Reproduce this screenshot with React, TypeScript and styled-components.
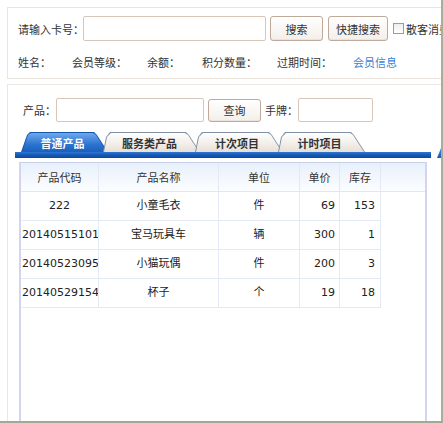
import styled, { createGlobalStyle } from "styled-components";

const GlobalStyle = createGlobalStyle`
  html, body {
    margin: 0;
    padding: 0;
    background: #ffffff;
  }
  body {
    font-family: "DejaVu Sans", "Noto Sans CJK SC", sans-serif;
    font-size: 11px;
    color: #333333;
  }
`;

interface Product {
  code: string;
  name: string;
  unit: string;
  price: number;
  stock: number;
}

const products: Product[] = [
  { code: "222", name: "小童毛衣", unit: "件", price: 69, stock: 153 },
  { code: "201405151012", name: "宝马玩具车", unit: "辆", price: 300, stock: 1 },
  { code: "201405230958", name: "小猫玩偶", unit: "件", price: 200, stock: 3 },
  { code: "201405291540", name: "杯子", unit: "个", price: 19, stock: 18 },
];

const tabs = [
  { label: "普通产品", width: 87, active: true },
  { label: "服务类产品", width: 97 },
  { label: "计次项目", width: 88 },
  { label: "计时项目", width: 87 },
];

const infoItems = [
  { label: "姓名：", width: 54 },
  { label: "会员等级：", width: 75 },
  { label: "余额：", width: 55 },
  { label: "积分数量：", width: 75 },
  { label: "过期时间：", width: 76 },
];

export default function App() {
  return (
    <>
      <GlobalStyle />
      <Frame>
        <MemberPanel>
          <SearchRow>
            <Label $w={65}>请输入卡号：</Label>
            <TextInput $w={183} $h={25} />
            <Button $w={53} $h={25} $ml={4}>
              搜索
            </Button>
            <Button $w={60} $h={25} $ml={5}>
              快捷搜索
            </Button>
            <CheckLabel>
              <CheckBox />
              散客消费
            </CheckLabel>
          </SearchRow>
          <InfoRow>
            {infoItems.map((it) => (
              <Label key={it.label} $w={it.width}>
                {it.label}
              </Label>
            ))}
            <Link>会员信息</Link>
          </InfoRow>
        </MemberPanel>

        <ProductPanel>
          <FilterRow>
            <Label $w={33}>产品：</Label>
            <TextInput $w={148} $h={24} />
            <Button $w={53} $h={23} $ml={4}>
              查询
            </Button>
            <Label $w={33} $ml={4}>
              手牌：
            </Label>
            <TextInput $w={75} $h={24} />
          </FilterRow>

          <TabStrip>
            {tabs.map((t) => (
              <Tab key={t.label} $w={t.width} $active={!!t.active}>
                <span>{t.label}</span>
              </Tab>
            ))}
          </TabStrip>
          <BarRow>
            <TabBar />
            <BarTail />
          </BarRow>

          <Grid>
            <HeadRow>
              <HeadCell>产品代码</HeadCell>
              <HeadCell>产品名称</HeadCell>
              <HeadCell>单位</HeadCell>
              <HeadCell>单价</HeadCell>
              <HeadCell>库存</HeadCell>
              <HeadCell $last />
            </HeadRow>
            {products.map((p) => (
              <Row key={p.code}>
                <Cell $align="center">{p.code}</Cell>
                <Cell $align="center">{p.name}</Cell>
                <Cell $align="center">{p.unit}</Cell>
                <Cell $align="right">{p.price}</Cell>
                <Cell $align="right" $pad={5}>
                  {p.stock}
                </Cell>
              </Row>
            ))}
          </Grid>
        </ProductPanel>
      </Frame>
    </>
  );
}

const Frame = styled.div`
  width: 443px;
  height: 423px;
  box-sizing: border-box;
  border-right: 2px solid #a9ac98;
  border-bottom: 2px solid #a4a792;
  overflow: hidden;
  padding: 7px 0 0 7px;
  display: flex;
  flex-direction: column;
  gap: 5px;
`;

const MemberPanel = styled.div`
  flex-shrink: 0;
  width: 470px;
  height: 72px;
  box-sizing: border-box;
  border: 1px solid #ece5de;
  padding: 8px 0 0 10px;
`;

const SearchRow = styled.div`
  display: flex;
  align-items: center;
  height: 25px;
`;

const InfoRow = styled.div`
  display: flex;
  align-items: center;
  margin-top: 13px;
  height: 16px;
`;

const Label = styled.span<{ $w: number; $ml?: number }>`
  flex-shrink: 0;
  width: ${(p) => p.$w}px;
  margin-left: ${(p) => p.$ml ?? 0}px;
  white-space: nowrap;
  color: #333333;
`;

const Link = styled.span`
  color: #3d7fd6;
  white-space: nowrap;
`;

const TextInput = styled.div<{ $w: number; $h: number }>`
  flex-shrink: 0;
  width: ${(p) => p.$w}px;
  height: ${(p) => p.$h}px;
  box-sizing: border-box;
  border: 1px solid #d8c6b8;
  border-radius: 2px;
  background: #ffffff;
`;

const Button = styled.div<{ $w: number; $h: number; $ml: number }>`
  flex-shrink: 0;
  width: ${(p) => p.$w}px;
  height: ${(p) => p.$h}px;
  margin-left: ${(p) => p.$ml}px;
  box-sizing: border-box;
  border: 1px solid #bea99a;
  border-radius: 3px;
  background: linear-gradient(#ffffff, #f3efea);
  box-shadow: inset 0 -1px 0 #ebe3dc;
  display: flex;
  align-items: center;
  justify-content: center;
  color: #333333;
`;

const CheckLabel = styled.span`
  display: flex;
  align-items: center;
  margin-left: 5px;
  white-space: nowrap;
  gap: 2px;
`;

const CheckBox = styled.span`
  width: 11px;
  height: 11px;
  box-sizing: border-box;
  border: 1px solid #9c9c9c;
  background: linear-gradient(#eeeeee, #ffffff);
`;

const ProductPanel = styled.div`
  flex: 1;
  width: 470px;
  box-sizing: border-box;
  border: 1px solid #ede7e1;
  border-bottom: none;
  padding: 13px 0 0 7px;
  display: flex;
  flex-direction: column;
`;

const FilterRow = styled.div`
  display: flex;
  align-items: center;
  height: 24px;
  margin-left: 8px;
`;

const TabStrip = styled.div`
  display: flex;
  align-items: flex-end;
  margin-top: 10px;
  padding-left: 6px;
  height: 20px;
`;

const Tab = styled.div<{ $w: number; $active: boolean }>`
  position: relative;
  flex-shrink: 0;
  width: ${(p) => p.$w}px;
  height: 20px;
  margin-right: -5px;
  display: flex;
  align-items: center;
  justify-content: center;
  font-weight: bold;
  color: ${(p) => (p.$active ? "#ffffff" : "#333333")};

  &::before,
  &::after {
    content: "";
    position: absolute;
    left: 0;
    right: 0;
    bottom: 0;
  }
  &::before {
    top: 0;
    background: ${(p) => (p.$active ? "#1556ad" : "#8192a6")};
    clip-path: ${(p) =>
      p.$active
        ? "polygon(0 100%, 6px 3px, 9px 0, calc(100% - 14px) 0, calc(100% - 11px) 3px, 100% 100%)"
        : "polygon(0 100%, 3px 5px, 7px 0, calc(100% - 14px) 0, calc(100% - 11px) 3px, 100% 100%)"};
  }
  &::after {
    top: 1px;
    background: ${(p) =>
      p.$active
        ? "linear-gradient(#6ea8ec, #2d74d0 60%, #1860bf)"
        : "linear-gradient(#ffffff, #f4f0eb 50%, #e6dfd6)"};
    clip-path: ${(p) =>
      p.$active
        ? "polygon(1px 100%, 7px 2px, 10px 0, calc(100% - 15px) 0, calc(100% - 12px) 2px, calc(100% - 1px) 100%)"
        : "polygon(1px 100%, 4px 4px, 8px 0, calc(100% - 15px) 0, calc(100% - 12px) 2px, calc(100% - 1px) 100%)"};
  }
  span {
    position: relative;
    z-index: 1;
    padding-right: 4px;
    padding-top: 1px;
  }
`;

const BarRow = styled.div`
  display: flex;
  align-items: flex-end;
  height: 6px;
`;

const TabBar = styled.div`
  width: 416px;
  height: 6px;
  flex-shrink: 0;
  background: linear-gradient(#2f76d2, #1659b5 50%, #0e4a9e);
`;

const BarTail = styled.div`
  width: 20px;
  height: 10px;
  margin-left: 6px;
  flex-shrink: 0;
  background: linear-gradient(#4a8ae0, #1659b5);
  clip-path: polygon(0 100%, 4px 0, 100% 0, 100% 100%);
`;

const Grid = styled.div`
  flex: 1;
  width: 408px;
  margin: 4px 0 0 4px;
  box-sizing: border-box;
  border-left: 2px solid #d3d4f0;
  border-right: 2px solid #d3d4f0;
  border-top: 1px solid #c9d0ea;
`;

const HeadRow = styled.div`
  display: grid;
  grid-template-columns: 78px 120px 81px 40px 41px 1fr;
  height: 29px;
  box-sizing: border-box;
  border-bottom: 1px solid #dfe7f4;
  background: linear-gradient(#e7f0fb, #f4f8fd 60%, #fbfdff);
`;

const HeadCell = styled.div<{ $last?: boolean }>`
  display: flex;
  align-items: center;
  justify-content: center;
  border-right: ${(p) => (p.$last ? "none" : "1px solid #e1e9f6")};
  color: #333333;
`;

const Row = styled.div`
  display: grid;
  grid-template-columns: 78px 120px 81px 40px 41px;
  width: 360px;
  height: 29px;
  box-sizing: border-box;
  border-bottom: 1px solid #e3eaf6;
`;

const Cell = styled.div<{ $align: "center" | "right"; $pad?: number }>`
  box-sizing: border-box;
  border-right: 1px solid #e3eaf6;
  overflow: hidden;
  white-space: nowrap;
  line-height: 28px;
  text-align: ${(p) => p.$align};
  padding: 0 ${(p) => (p.$align === "right" ? p.$pad ?? 4 : 1)}px 0
    ${(p) => (p.$align === "right" ? 0 : 1)}px;
  color: #222222;
`;
